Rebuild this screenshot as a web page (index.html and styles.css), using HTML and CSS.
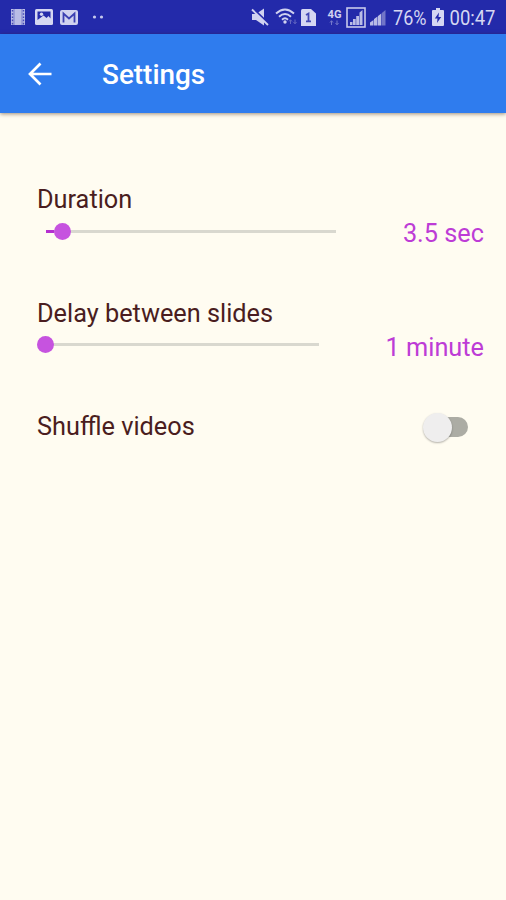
FILE: index.html
```html
<!DOCTYPE html>
<html lang="en">
<head>
<meta charset="utf-8">
<title>Settings</title>
<link rel="stylesheet" href="styles.css">
</head>
<body>
<div class="statusBar">
	<div class="notices">
		<svg width="16" height="16" viewBox="0 0 16 16">
			<path d="M1 0h14v16H1z" fill="#b9bce6"/>
			<path d="M4 0v16M12 0v16" stroke="#7d81cd" stroke-width="1"/>
			<path d="M2.5 1v15M13.5 1v15" stroke="#4448b5" stroke-width="1.4" stroke-dasharray="1.6 1.6"/>
		</svg>
		<svg width="18" height="16" viewBox="0 0 18 16">
			<rect width="18" height="16" rx="1.5" fill="#d5d7f2"/>
			<path d="M2.5 11V2.5h13v7l-2-2.500-2 2-3-2.500z" fill="#252bab"/>
			<circle cx="6.500" cy="5.300" r="1.700" fill="#d5d7f2"/>
		</svg>
		<svg width="18" height="15" viewBox="0 0 18 15">
			<rect width="18" height="15" rx="2" fill="#d0d2f0"/>
			<path d="M3.500 12.500V3.500L9 8.500l5.500-5v9" fill="none" stroke="#3b40b2" stroke-width="1.800"/>
		</svg>
		<svg width="12" height="4" viewBox="0 0 12 4">
			<circle cx="2.500" cy="2" r="1.600" fill="#c5c8ec"/>
			<circle cx="9.500" cy="2" r="1.600" fill="#c5c8ec"/>
		</svg>
	</div>
	<div class="system">
		<svg width="18" height="18" viewBox="0 0 18 18">
			<path d="M1 6h4l8-5.500v17L5 12H1z" fill="#d0d2f0"/>
			<path d="M1.500 0l16 15.500" stroke="#252bab" stroke-width="2"/>
			<path d="M1 1.500l16 15.500" stroke="#d0d2f0" stroke-width="1.800"/>
		</svg>
		<svg class="wifi" width="23" height="18" viewBox="0 0 23 18">
			<g fill="none" stroke="#d0d2f0" stroke-width="1.900">
				<path d="M1 5.500Q10 -2.500 19 5.500"/>
				<path d="M4 8.700Q10 3.300 16 8.700"/>
				<path d="M7 11.700Q10 9 13 11.700"/>
			</g>
			<circle cx="10" cy="14" r="1.700" fill="#d0d2f0"/>
			<path d="M15.500 16v-4m-1.500 1.500l1.500-1.800 1.500 1.800M20 11.500v4m-1.500-1.500l1.500 1.800 1.500-1.800" fill="none" stroke="#6569c3"/>
		</svg>
		<svg class="sim" width="15" height="17" viewBox="0 0 15 17">
			<path d="M1.500 0H10l5 4.500V17H0V1.500Q0 0 1.500 0z" fill="#d5d7f2"/>
			<path d="M5 6l2.500-1.500V12M5 12.300h5" fill="none" stroke="#4348b5" stroke-width="1.800"/>
		</svg>
		<svg class="network" width="15" height="17" viewBox="0 0 15 17">
			<text class="netText" x="0.500" y="9" textLength="14" lengthAdjust="spacingAndGlyphs">4G</text>
			<path d="M4.500 16v-4m-1.500 1.500l1.500-1.800 1.500 1.800M10 11.500v4m-1.500-1.500l1.500 1.800 1.500-1.800" fill="none" stroke="#7478ca"/>
		</svg>
		<svg class="boxed" width="20" height="21" viewBox="0 0 20 21">
			<rect x="1" y="1" width="18" height="19" fill="none" stroke="#c7c9ec" stroke-width="1.600"/>
			<path d="M4 18v-3h2.500v3zM7 18v-6h2.700v6zM10.200 18V9h2.800v9zM13.500 18V5.500L16.500 3v15z" fill="#b9bce6"/>
		</svg>
		<svg class="signal" width="16" height="17" viewBox="0 0 16 17">
			<path d="M0 16.500v-3l3.500-2.500v5.500zM4 16.500v-6.500l3.500-2.500v9zM8 16.500V7l3.300-2.500v12z" fill="#b9bce6"/>
			<path d="M11.800 16.500V4L15.500 1v15.500z" fill="#7175c8"/>
		</svg>
		<svg class="percent" width="34" height="24" viewBox="0 0 34 24">
			<text class="statusText" x="0" y="20" textLength="33.500" lengthAdjust="spacingAndGlyphs">76%</text>
		</svg>
		<svg class="battery" width="12" height="18" viewBox="0 0 12 18">
			<path d="M4 0h4v2h3q1 0 1 1v14q0 1-1 1H1q-1 0-1-1V3q0-1 1-1h3z" fill="#d5d7f2"/>
			<path d="M7 4.500L2.800 10.500h2.700L5 15l4.200-6H6.500z" fill="#252bab"/>
		</svg>
		<svg class="clock" width="47" height="24" viewBox="0 0 47 24">
			<text class="statusText" x="-0.500" y="20" textLength="46" lengthAdjust="spacingAndGlyphs">00:47</text>
		</svg>
	</div>
</div>
<div class="toolbar">
	<svg class="back" width="24" height="24" viewBox="0 0 24 24">
		<path d="M12.500 1.500L2 12l10.500 10.500M2 12h21.500" fill="none" stroke="#fff" stroke-width="2.700"/>
	</svg>
	<h1>Settings</h1>
</div>
<div class="settings">
	<div class="item">
		<div class="label">Duration</div>
		<div class="row">
			<div class="slider duration">
				<div class="fill"></div>
				<div class="thumb"></div>
			</div>
			<span class="value">3.5 sec</span>
		</div>
	</div>
	<div class="item">
		<div class="label">Delay between slides</div>
		<div class="row">
			<div class="slider delay">
				<div class="thumb"></div>
			</div>
			<span class="value">1 minute</span>
		</div>
	</div>
	<div class="item shuffle">
		<div class="label">Shuffle videos</div>
		<div class="switch"><div class="knob"></div></div>
	</div>
</div>
</body>
</html>
```
FILE: styles.css
```css
body{
	margin:0;
	height:900px;
	overflow:hidden;
	background-color:#fffcf1;
	font-family:Roboto, "Liberation Sans", sans-serif;
}
svg{
	display:block;
	flex:none;
	overflow:visible;
}
.statusBar{
	display:flex;
	justify-content:space-between;
	box-sizing:border-box;
	height:34px;
	padding:0 9px 0 10px;
	background-color:#232aaa;
}
.notices{
	display:flex;
	align-items:center;
	gap:9px;
}
.notices svg:nth-child(3){
	margin-left:-2px;
}
.notices svg:last-child{
	margin-left:5px;
}
.system{
	display:flex;
	align-items:center;
}
.wifi{
	margin-left:6px;
}
.sim{
	margin-left:3px;
}
.network{
	margin-left:11px;
}
.boxed{
	margin-left:4px;
}
.signal{
	margin-left:4px;
}
.percent{
	margin-left:7px;
}
.battery{
	margin-left:5px;
}
.clock{
	margin-left:6px;
}
.statusText{
	font-size:20px;
	fill:#d5d7f2;
}
.netText{
	font-size:11px;
	font-weight:700;
	fill:#d0d2f0;
}
.toolbar{
	display:flex;
	align-items:center;
	height:79px;
	padding-left:28px;
	background-color:#2f7cee;
	box-shadow:0 1px 4px rgba(60,30,0,.5);
}
.toolbar h1{
	margin:3px 0 0 50px;
	font-size:27.9px;
	line-height:32px;
	font-weight:500;
	color:#fff;
}
.settings{
	padding:71px 22px 0 37px;
}
.item{
	height:113.5px;
}
.label{
	font-size:25.3px;
	line-height:32px;
	color:#4a1d20;
}
.row{
	display:flex;
	align-items:center;
	justify-content:space-between;
	height:32px;
	margin-top:-1px;
}
.slider{
	display:flex;
	align-items:center;
	height:3px;
	margin-left:9px;
	background-color:#d9d8cf;
}
.duration{
	width:290px;
}
.delay{
	width:273px;
}
.fill{
	width:8px;
	height:3px;
	background-color:#b52fd0;
}
.thumb{
	width:17px;
	height:17px;
	border-radius:50%;
	background-color:#c653df;
}
.delay .thumb{
	margin-left:-9px;
}
.value{
	margin-top:6px;
	font-size:25.3px;
	line-height:30px;
	color:#bd3cd6;
}
.shuffle{
	display:flex;
	align-items:flex-start;
	justify-content:space-between;
}
.switch{
	display:flex;
	align-items:center;
	width:40px;
	height:20px;
	margin:6px 16px 0 0;
	border-radius:10px;
	background-color:#acaca4;
}
.knob{
	width:29px;
	height:29px;
	flex:none;
	margin-left:-5px;
	border-radius:50%;
	background-color:#efeeee;
	box-shadow:0 1px 2px rgba(0,0,0,.3);
}
```
